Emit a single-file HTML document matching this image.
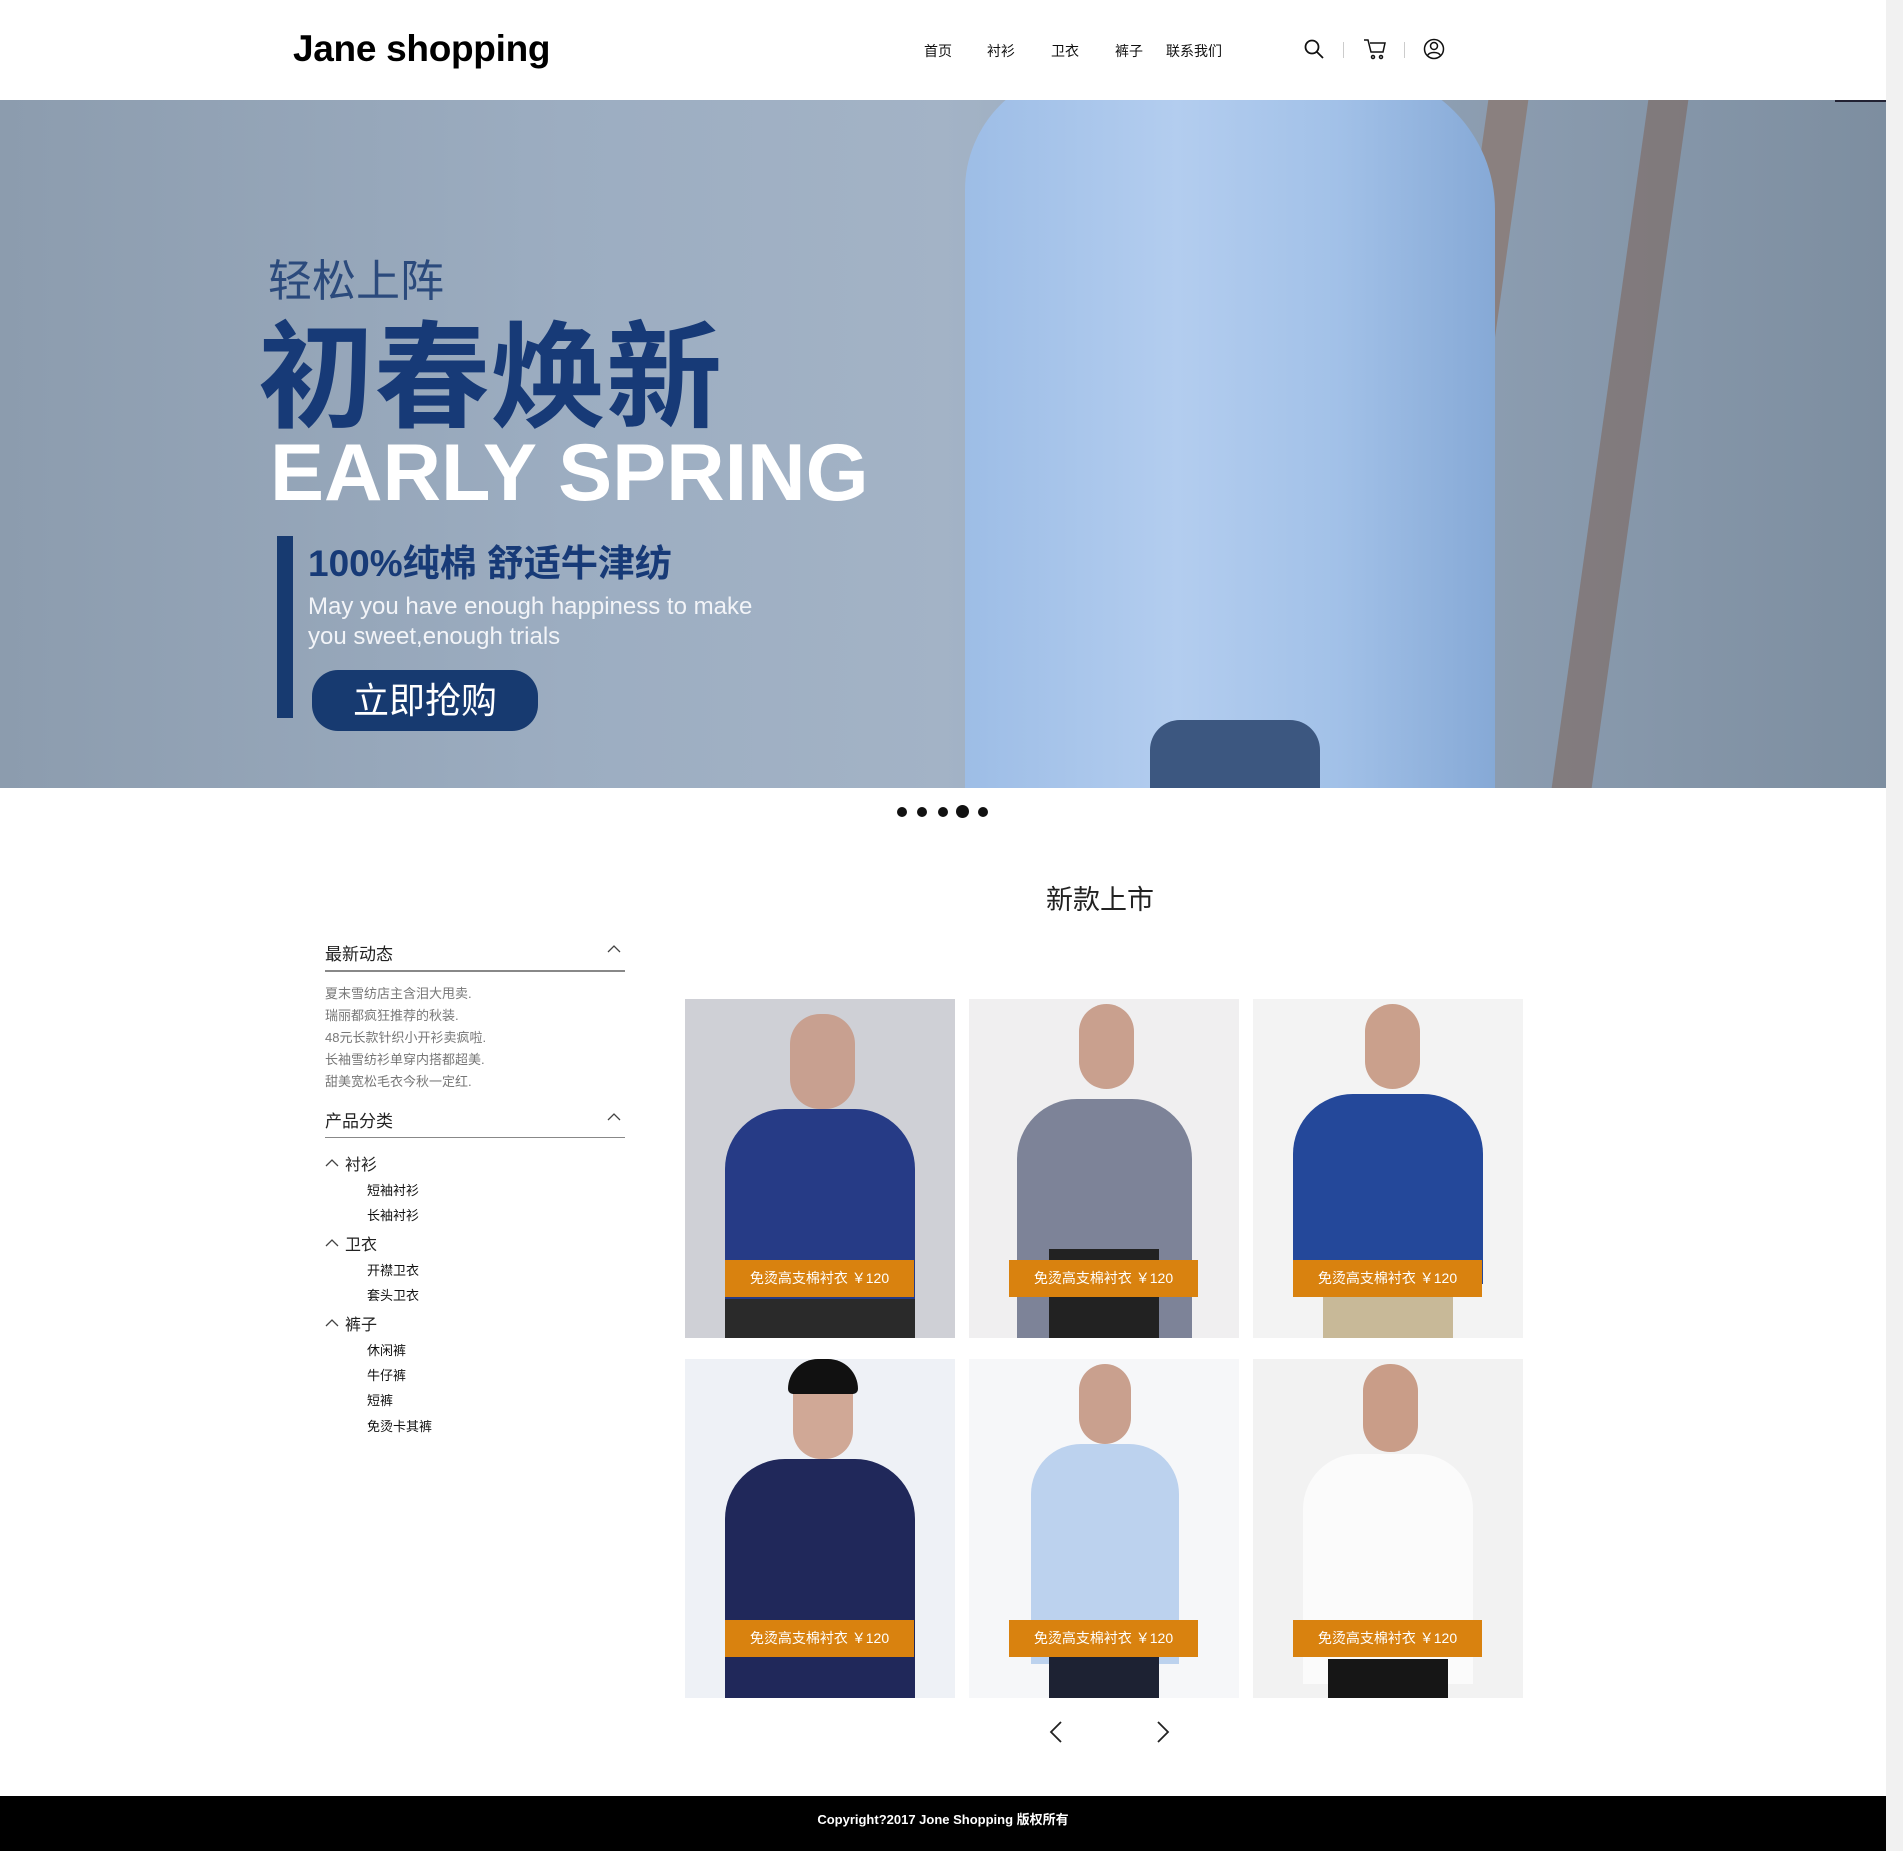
<!DOCTYPE html>
<html><head><meta charset="utf-8"><style>
*{margin:0;padding:0;box-sizing:border-box}
body{width:1903px;height:1851px;position:relative;background:#fff;font-family:"Liberation Sans","Noto Sans CJK SC",sans-serif;overflow:hidden}
.a{position:absolute;white-space:nowrap}
.nav{font-size:14px;color:#111;top:41px}
.sb{position:absolute;left:1886px;top:0;width:17px;height:1851px;background:#f1f1f1}
.news{font-size:13px;color:#777;left:325px}
.cat{font-size:16px;color:#222;left:345px}
.sub{font-size:13px;color:#111;left:367px}
.card{position:absolute;width:270px;height:339px;overflow:hidden}
.lab{position:absolute;left:40px;top:261px;width:189px;height:37px;background:#d9820f;color:#fff;font-size:14px;line-height:37px;text-align:center}
</style></head><body>
<div class="a" style="left:293px;top:28px;font-size:37px;font-weight:bold;color:#000;letter-spacing:-0.3px">Jane shopping</div>
<div class="a nav" style="left:924px">首页</div>
<div class="a nav" style="left:987px">衬衫</div>
<div class="a nav" style="left:1051px">卫衣</div>
<div class="a nav" style="left:1115px">裤子</div>
<div class="a nav" style="left:1166px">联系我们</div>
<svg class="a" style="left:1303px;top:38px" width="22" height="22" viewBox="0 0 22 22" fill="none" stroke="#111" stroke-width="1.8"><circle cx="9" cy="9" r="6.5"/><path d="M14 14l6 6"/></svg>
<div class="a" style="left:1343px;top:42px;width:1px;height:16px;background:#ccc"></div>
<svg class="a" style="left:1363px;top:38px" width="24" height="22" viewBox="0 0 24 22" fill="none" stroke="#111" stroke-width="1.5"><path d="M1 2h4l3 12h12l2-9H7"/><circle cx="10" cy="19" r="1.5"/><circle cx="18" cy="19" r="1.5"/></svg>
<div class="a" style="left:1404px;top:42px;width:1px;height:16px;background:#ccc"></div>
<svg class="a" style="left:1423px;top:38px" width="22" height="22" viewBox="0 0 22 22" fill="none" stroke="#111" stroke-width="1.5"><circle cx="11" cy="11" r="9.5"/><circle cx="11" cy="8" r="3.5"/><path d="M4.5 17.5c2-4 11-4 13 0"/></svg>

<div class="a" style="left:0;top:100px;width:1886px;height:688px;overflow:hidden;background:linear-gradient(90deg,#8c9cae 0%,#9cadc1 30%,#a3b3c6 50%,#8e9fb3 75%,#7d8ea0 100%)">
 <div style="position:absolute;left:1440px;top:0;width:40px;height:688px;background:#8a6a58;opacity:.55;transform:skewX(-8deg)"></div>
 <div style="position:absolute;left:1600px;top:0;width:40px;height:688px;background:#7b5e50;opacity:.5;transform:skewX(-8deg)"></div>
 <div style="position:absolute;left:965px;top:-30px;width:530px;height:760px;background:linear-gradient(90deg,#9dbde6,#b3cdef 40%,#a2c1e8 70%,#86a9d6);border-radius:120px 140px 40px 40px"></div>
 <div style="position:absolute;left:1150px;top:620px;width:170px;height:80px;background:#3c5780;border-radius:30px 30px 0 0"></div>
 <div class="a" style="left:268px;top:145px;font-size:44px;color:#2b4a7c">轻松上阵</div>
 <div class="a" style="left:258px;top:215px;font-size:116px;font-weight:bold;color:#173a77;line-height:1.1">初春焕新</div>
 <div class="a" style="left:270px;top:333px;font-size:81px;font-weight:bold;color:#fff;line-height:1">EARLY SPRING</div>
 <div style="position:absolute;left:277px;top:436px;width:16px;height:182px;background:#173a70"></div>
 <div class="a" style="left:308px;top:433px;font-size:37px;font-weight:bold;color:#173a77">100%纯棉 舒适牛津纺</div>
 <div class="a" style="left:308px;top:492px;font-size:24px;color:#f2f4f8;line-height:30px">May you have enough happiness to make<br>you sweet,enough trials</div>
 <div style="position:absolute;left:312px;top:570px;width:226px;height:61px;border-radius:26px;background:#173a70;color:#fff;font-size:36px;line-height:61px;text-align:center">立即抢购</div>
</div>
<div class="a" style="left:1835px;top:100px;width:51px;height:2px;background:#223"></div>
<div class="a" style="left:897px;top:807px;width:10px;height:10px;border-radius:50%;background:#111"></div>
<div class="a" style="left:917px;top:807px;width:10px;height:10px;border-radius:50%;background:#111"></div>
<div class="a" style="left:938px;top:807px;width:10px;height:10px;border-radius:50%;background:#111"></div>
<div class="a" style="left:956px;top:805px;width:13px;height:13px;border-radius:50%;background:#111"></div>
<div class="a" style="left:978px;top:807px;width:10px;height:10px;border-radius:50%;background:#111"></div>

<div class="a" style="left:1046px;top:878px;font-size:27px;color:#222">新款上市</div>

<div class="a" style="left:325px;top:940px;font-size:17px;color:#222">最新动态</div>
<svg class="a" style="left:607px;top:944px" width="14" height="10" viewBox="0 0 14 10" fill="none" stroke="#444" stroke-width="1.3"><path d="M1 8l6-6 6 6"/></svg>
<div class="a" style="left:325px;top:970px;width:300px;height:2px;background:#888"></div>
<div class="a news" style="top:983px">夏末雪纺店主含泪大甩卖.</div>
<div class="a news" style="top:1005px">瑞丽都疯狂推荐的秋装.</div>
<div class="a news" style="top:1027px">48元长款针织小开衫卖疯啦.</div>
<div class="a news" style="top:1049px">长袖雪纺衫单穿内搭都超美.</div>
<div class="a news" style="top:1071px">甜美宽松毛衣今秋一定红.</div>
<div class="a" style="left:325px;top:1107px;font-size:17px;color:#222">产品分类</div>
<svg class="a" style="left:607px;top:1112px" width="14" height="10" viewBox="0 0 14 10" fill="none" stroke="#444" stroke-width="1.3"><path d="M1 8l6-6 6 6"/></svg>
<div class="a" style="left:325px;top:1137px;width:300px;height:1px;background:#888"></div>
<svg class="a" style="left:325px;top:1158px" width="14" height="10" viewBox="0 0 14 10" fill="none" stroke="#444" stroke-width="1.3"><path d="M1 8l6-6 6 6"/></svg>
<div class="a cat" style="top:1151px">衬衫</div>
<div class="a sub" style="top:1180px">短袖衬衫</div>
<div class="a sub" style="top:1205px">长袖衬衫</div>
<svg class="a" style="left:325px;top:1238px" width="14" height="10" viewBox="0 0 14 10" fill="none" stroke="#444" stroke-width="1.3"><path d="M1 8l6-6 6 6"/></svg>
<div class="a cat" style="top:1231px">卫衣</div>
<div class="a sub" style="top:1260px">开襟卫衣</div>
<div class="a sub" style="top:1285px">套头卫衣</div>
<svg class="a" style="left:325px;top:1318px" width="14" height="10" viewBox="0 0 14 10" fill="none" stroke="#444" stroke-width="1.3"><path d="M1 8l6-6 6 6"/></svg>
<div class="a cat" style="top:1311px">裤子</div>
<div class="a sub" style="top:1340px">休闲裤</div>
<div class="a sub" style="top:1365px">牛仔裤</div>
<div class="a sub" style="top:1390px">短裤</div>
<div class="a sub" style="top:1416px">免烫卡其裤</div>

<div class="card" style="left:685px;top:999px;background:#cfd0d6"><div style="position:absolute;left:40px;top:110px;width:190px;height:240px;background:#263b86;border-radius:60px 60px 0 0"></div><div style="position:absolute;left:105px;top:15px;width:65px;height:95px;background:#c8a090;border-radius:30px"></div><div style="position:absolute;left:40px;top:300px;width:190px;height:40px;background:#2a2a2a"></div><div class="lab">免烫高支棉衬衣 ￥120</div></div>
<div class="card" style="left:969px;top:999px;background:#f0eff0"><div style="position:absolute;left:48px;top:100px;width:175px;height:240px;background:#7d8398;border-radius:60px 60px 0 0"></div><div style="position:absolute;left:110px;top:5px;width:55px;height:85px;background:#c9a08e;border-radius:28px"></div><div style="position:absolute;left:80px;top:250px;width:110px;height:90px;background:#222"></div><div class="lab">免烫高支棉衬衣 ￥120</div></div>
<div class="card" style="left:1253px;top:999px;background:#f3f3f3"><div style="position:absolute;left:40px;top:95px;width:190px;height:190px;background:#24489a;border-radius:60px 60px 0 0"></div><div style="position:absolute;left:112px;top:5px;width:55px;height:85px;background:#caa08c;border-radius:28px"></div><div style="position:absolute;left:70px;top:270px;width:130px;height:70px;background:#c8b998"></div><div class="lab">免烫高支棉衬衣 ￥120</div></div>
<div class="card" style="left:685px;top:1359px;background:#eef1f6"><div style="position:absolute;left:40px;top:100px;width:190px;height:240px;background:#20285a;border-radius:60px 60px 0 0"></div><div style="position:absolute;left:108px;top:5px;width:60px;height:95px;background:#d0a896;border-radius:28px"></div><div style="position:absolute;left:103px;top:0;width:70px;height:35px;background:#111;border-radius:30px 30px 5px 5px"></div><div class="lab">免烫高支棉衬衣 ￥120</div></div>
<div class="card" style="left:969px;top:1359px;background:#f6f7f9"><div style="position:absolute;left:62px;top:85px;width:148px;height:220px;background:#bcd2ee;border-radius:50px 50px 0 0"></div><div style="position:absolute;left:110px;top:5px;width:52px;height:80px;background:#c9a08e;border-radius:26px"></div><div style="position:absolute;left:80px;top:290px;width:110px;height:50px;background:#1d2233"></div><div class="lab">免烫高支棉衬衣 ￥120</div></div>
<div class="card" style="left:1253px;top:1359px;background:#f2f2f2"><div style="position:absolute;left:50px;top:95px;width:170px;height:230px;background:#fbfbfb;border-radius:55px 55px 0 0"></div><div style="position:absolute;left:110px;top:5px;width:55px;height:88px;background:#c99d88;border-radius:27px"></div><div style="position:absolute;left:75px;top:300px;width:120px;height:40px;background:#161616"></div><div class="lab">免烫高支棉衬衣 ￥120</div></div>

<svg class="a" style="left:1048px;top:1720px" width="16" height="24" viewBox="0 0 16 24" fill="none" stroke="#222" stroke-width="1.8"><path d="M13 2L3 12l10 10"/></svg>
<svg class="a" style="left:1155px;top:1720px" width="16" height="24" viewBox="0 0 16 24" fill="none" stroke="#222" stroke-width="1.8"><path d="M3 2l10 10-10 10"/></svg>

<div class="a" style="left:0;top:1796px;width:1886px;height:55px;background:#000;color:#fff;font-size:13px;font-weight:bold;text-align:center;line-height:48px">Copyright?2017 Jone Shopping 版权所有</div>
<div class="sb"></div>
</body></html>
